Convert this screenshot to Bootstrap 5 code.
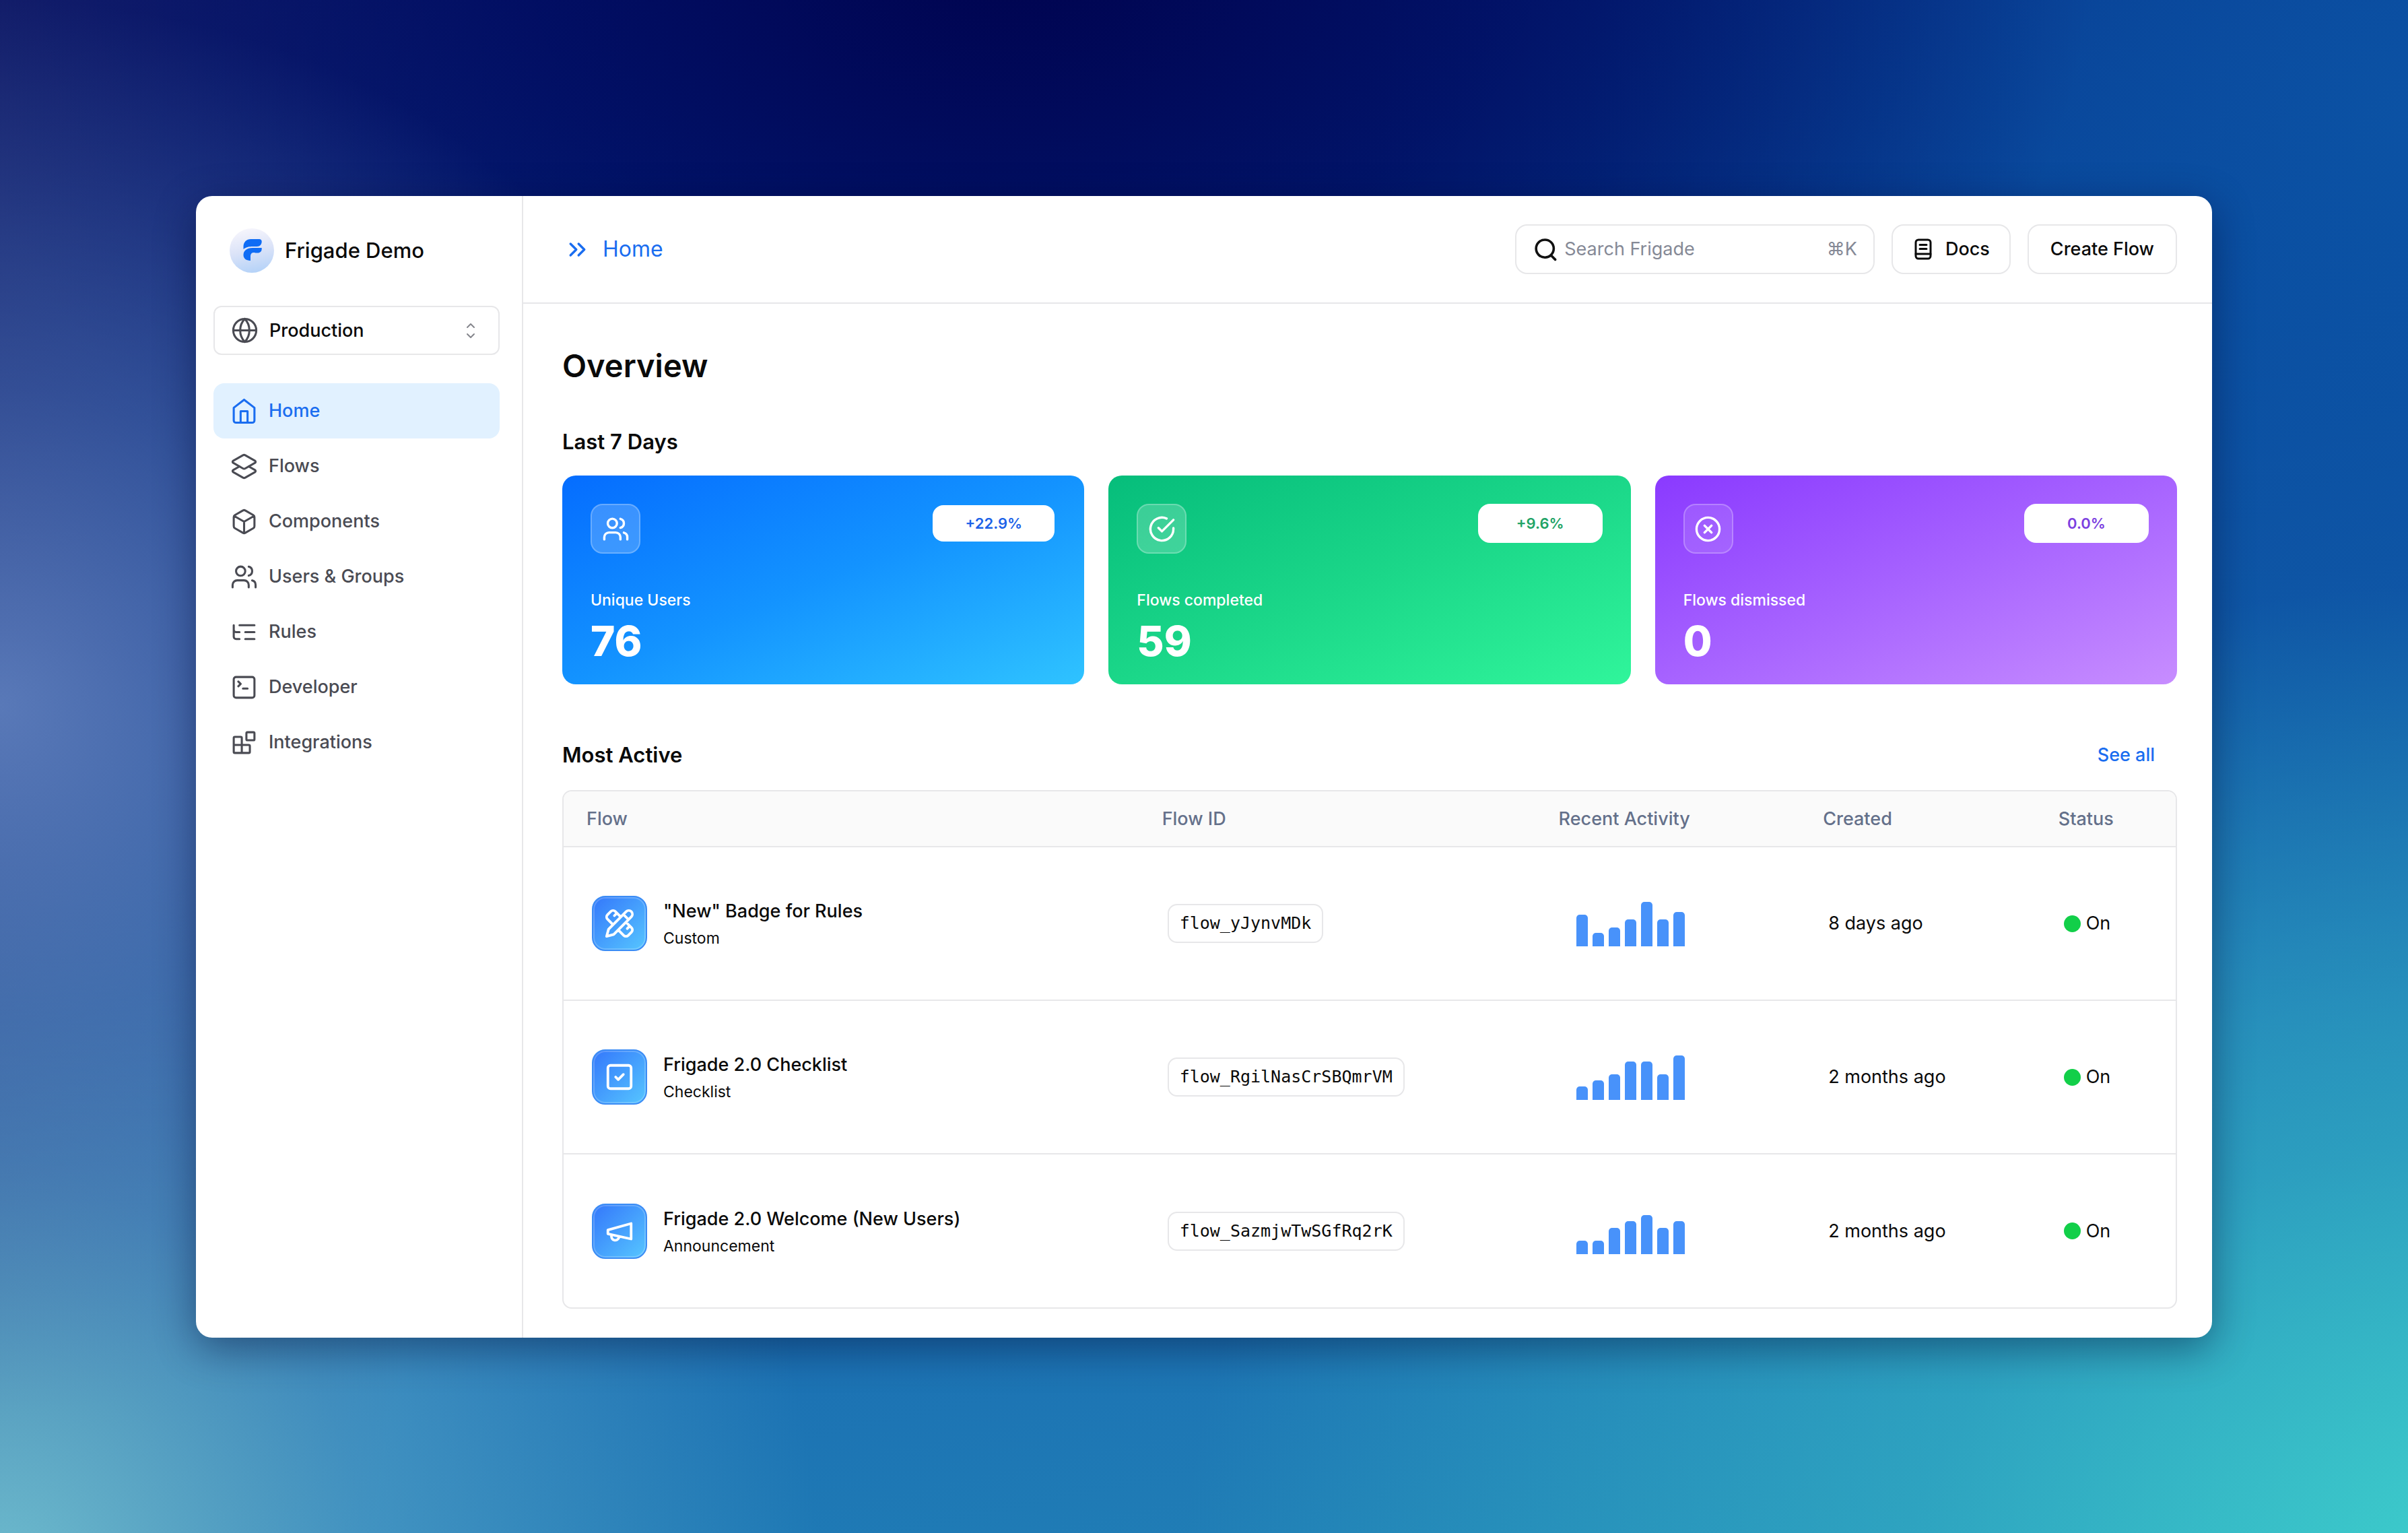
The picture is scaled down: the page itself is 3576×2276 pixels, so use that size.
<!DOCTYPE html>
<html lang="en">
<head>
<meta charset="utf-8">
<meta name="viewport" content="width=device-width, initial-scale=1">
<title>Frigade Demo</title>
<link rel="stylesheet" href="https://cdn.jsdelivr.net/npm/bootstrap@5.3.0/dist/css/bootstrap.min.css">
<style>
  :root { --line: #e7e7e9; --blue: #1a6df0; --ink: #4a4b53; --muted: #64708a; }
  body {
    font-family: Inter, "Liberation Sans", sans-serif; font-size: 27px; line-height: 40px; color: #0a0a0a;
    background:
      radial-gradient(ellipse 32% 46% at 0% 46%, rgba(96,128,190,.9), rgba(84,118,184,.5) 45%, transparent),
      radial-gradient(ellipse 34% 62% at 0% 104%, rgba(116,196,210,.95), rgba(96,172,204,.55) 45%, transparent),
      radial-gradient(ellipse 55% 66% at 104% 104%, #3fd2cd, rgba(56,190,200,.55) 45%, transparent),
      radial-gradient(ellipse 45% 52% at 42% -4%, #00034f, rgba(0,8,92,.75) 45%, transparent),
      radial-gradient(ellipse 34% 60% at 100% 8%, rgba(12,84,166,.9), rgba(12,80,164,.5) 50%, transparent),
      linear-gradient(100deg, rgba(24,32,104,.8), transparent 24%),
      linear-gradient(168deg, #041a74 0%, #06479a 35%, #1a6db2 70%, #2488b8 100%);
  }
  .stage { padding: 291px; }
  .app-window { border-radius: 24px; box-shadow: 0 16px 60px rgba(0,10,50,.45); overflow: hidden; }
  .ico { fill: none; stroke: currentColor; stroke-width: 2; stroke-linecap: round; stroke-linejoin: round; width: 41px; height: 41px; flex: none; }
  a { text-decoration: none; }

  .sidebar { width: 486px; border-right: 2px solid var(--line); padding: 48px 33px 40px 26px; }
  .brand { padding-left: 24px; gap: 16px; font-size: 31px; font-weight: 500; margin-bottom: 49px; }
  .brand svg { width: 66px; height: 66px; }
  .env { height: 73px; border: 2px solid var(--line); border-radius: 12px; padding: 0 29px 0 24px; gap: 16px; margin-bottom: 42px; color: var(--ink); }
  .env select { border: 0; background: none; appearance: none; font-weight: 500; color: #0a0a0a; padding: 0; outline: 0; }
  .env .caret { width: 24px; height: 32px; color: #85868c; }
  .side-nav .nav-link { height: 82px; border-radius: 16px; padding: 0 0 0 25px; gap: 16px; color: var(--ink); font-weight: 500; }
  .side-nav .nav-link.active { background: #e1f1ff; color: var(--blue); }
  .side-nav .ico, .env .globe { stroke-width: 1.8; }

  .topbar { height: 160px; border-bottom: 2px solid var(--line); padding: 0 52px 0 60px; }
  .crumb { gap: 17px; font-size: 32px; color: var(--blue); }
  .tools { gap: 25px; }
  .field, .tool-btn { height: 74px; border: 2px solid var(--line); border-radius: 18px; background: #fff; }
  .field { width: 534px; padding: 0 24px 0 26px; gap: 11px; color: #858996; }
  .field input { border: 0; outline: 0; padding: 0; background: none; min-width: 0; }
  .field input::placeholder { color: #858996; opacity: 1; }
  .field svg { width: 38px; height: 38px; color: #111; }
  .tool-btn { font-size: 27px; font-weight: 500; color: #0a0a0a; padding: 0 32px; gap: 20px; }
  .tool-btn.docs { padding-right: 29px; }
  .tool-btn svg { width: 26px; height: 32px; }

  .content { padding: 62px 52px 43px 58px; }
  h1 { font-size: 47px; line-height: 60px; font-weight: 600; margin-bottom: 63px; }
  h2 { font-size: 31px; line-height: 40px; font-weight: 600; margin: 0; }
  .stats { gap: 36px; margin: 30px 0 85px; }
  .stat { border-radius: 20px; padding: 42px 42px 32px; color: #fff; }
  .stat-users { background: linear-gradient(158deg, #056dff, #1393ff 50%, #2fc3ff); }
  .stat-done { background: linear-gradient(158deg, #06bd7b, #1bd789 50%, #30f59b); }
  .stat-gone { background: linear-gradient(158deg, #8a3aff, #a763ff 50%, #c78dff); }
  .stat-icon { width: 74px; height: 74px; border-radius: 18px; border: 2px solid rgba(255,255,255,.24); background: rgba(255,255,255,.2); }
  .stat-gone .stat-icon { background: rgba(255,255,255,.12); }
  .delta { width: 185px; height: 58px; border-radius: 18px; background: #fff; font-size: 22px; font-weight: 600; }
  .stat-users .delta { color: #1c62e8; border: 2px solid transparent; background-clip: padding-box; }
  .stat-done .delta { color: #21a366; }
  .stat-gone .delta { color: #7c3fe0; }
  .stat-label { font-size: 23px; line-height: 34px; font-weight: 500; margin: 52px 0 12px; }
  .stat-value { font-size: 62px; line-height: 64px; font-weight: 800; }

  .see-all { color: var(--blue); font-weight: 500; padding-right: 33px; }
  .flows { border: 2px solid var(--line); border-radius: 14px; overflow: hidden; margin-top: 32px; }
  .flows table { table-layout: fixed; margin: 0; --bs-table-bg: transparent; color: #0a0a0a; }
  .flows th { height: 82px; padding: 0 0 0 34px; background: #fafafa; color: var(--muted); font-weight: 500; border-bottom: 2px solid var(--line); vertical-align: middle; }
  .flows td { height: 228px; padding: 0 0 0 42px; border-bottom: 2px solid var(--line); vertical-align: middle; }
  .flows tbody tr:last-child td { border-bottom: 0; }
  .c-flow { width: 35.7%; } .c-id { width: 24.6%; } .c-act { width: 16.4%; } .c-date { width: 14.6%; } .c-stat { width: 8.7%; }
  .flow-icon { width: 82px; height: 82px; border-radius: 20px; color: #fff; border: 2px solid #3b8cf5; background: linear-gradient(135deg, #3478fb, #56c6ff); box-shadow: inset 0 0 0 2px rgba(255,255,255,.2); }
  .flow-icon .ico { width: 46px; height: 46px; }
  .flow-text { line-height: 41px; padding-top: 4px; }
  .flow-text b { font-weight: 500; }
  .flow-text span { font-size: 23px; }
  .chip { font: 25px/54px "DejaVu Sans Mono", monospace; height: 58px; border: 2px solid var(--line); border-radius: 14px; padding: 0 16px; color: #0a0a0a; display: inline-block; vertical-align: middle; }
  .bars { height: 68px; gap: 7px; margin-left: 18px; }
  .bars i { width: 17px; background: #4892fa; border-radius: 5px 5px 0 0; }
  .dot { width: 25px; height: 25px; border-radius: 50%; background: #12cf49; }
  .state { gap: 8px; }
</style>
<script src="https://cdn.jsdelivr.net/npm/bootstrap@5.3.0/dist/js/bootstrap.bundle.min.js"></script>
</head>
<body>
<svg class="d-none" aria-hidden="true">
  <symbol id="users" viewBox="0 0 24 24"><path d="M16 21v-2a4 4 0 0 0-4-4H6a4 4 0 0 0-4 4v2"/><circle cx="9" cy="7" r="4"/><path d="M22 21v-2a4 4 0 0 0-3-3.87M16 3.13a4 4 0 0 1 0 7.75"/></symbol>
</svg>
<div class="stage d-flex min-vh-100">
<div class="app-window d-flex flex-grow-1 bg-white">

  <aside class="sidebar flex-shrink-0">
    <div class="brand d-flex align-items-center">
      <svg viewBox="0 0 66 66" aria-hidden="true">
        <defs><linearGradient id="lg" x1=".4" y1="0" x2=".6" y2="1"><stop offset="0" stop-color="#f6f5fc"/><stop offset=".5" stop-color="#dbe3f8"/><stop offset="1" stop-color="#b4d2f8"/></linearGradient></defs>
        <circle cx="33" cy="33" r="33" fill="url(#lg)"/>
        <path fill="#0f6cf5" d="M20.500 31v-4c0-6.500 4.500-11 11-11h12.500c2.200 0 3.700 1.400 3.700 3.500 0 4.500-2.700 7.500-7 7.500h-6c-6 0-9.500.5-14.200 4z"/>
        <path fill="#0f6cf5" d="M47.700 29v1.500c0 3.600-2.300 6-6 6h-3.200c-1.500 0-2.300-.4-3.300-.4-1.400 0-2.700.9-3.300 2-.6 1-.9 2-.9 4V48c-6.500 0-10.500-3.300-10.500-8.200 0-6.500 5-10.800 13.500-10.800z"/>
      </svg>
      <span>Frigade Demo</span>
    </div>

    <div class="env d-flex align-items-center">
      <svg class="ico globe" viewBox="0 0 24 24"><circle cx="12" cy="12" r="10"/><path d="M12 2a14.500 14.500 0 0 0 0 20 14.500 14.500 0 0 0 0-20M2 12h20"/></svg>
      <select class="flex-grow-1" aria-label="Environment"><option>Production</option></select>
      <svg class="ico caret" viewBox="0 0 24 32"><path d="m7 11 5-5 5 5M7 21l5 5 5-5"/></svg>
    </div>

    <nav class="side-nav nav flex-column">
      <a href="#" class="nav-link active d-flex align-items-center"><svg class="ico" viewBox="0 0 24 24"><path d="m3 9 9-7 9 7v11a2 2 0 0 1-2 2H5a2 2 0 0 1-2-2zM9 22V12h6v10"/></svg>Home</a>
      <a href="#" class="nav-link d-flex align-items-center"><svg class="ico" viewBox="0 0 24 24"><path d="m16.020 12 5.480 3.130a1 1 0 0 1 0 1.740L13 21.740a2 2 0 0 1-2 0l-8.500-4.870a1 1 0 0 1 0-1.740L7.980 12"/><path d="M13 13.740a2 2 0 0 1-2 0L2.500 8.870a1 1 0 0 1 0-1.740L11 2.260a2 2 0 0 1 2 0l8.500 4.870a1 1 0 0 1 0 1.740Z"/></svg>Flows</a>
      <a href="#" class="nav-link d-flex align-items-center"><svg class="ico" viewBox="0 0 24 24"><path d="M21 8a2 2 0 0 0-1-1.730l-7-4a2 2 0 0 0-2 0l-7 4A2 2 0 0 0 3 8v8a2 2 0 0 0 1 1.730l7 4a2 2 0 0 0 2 0l7-4A2 2 0 0 0 21 16ZM3.300 7l8.700 5 8.700-5M12 22V12"/></svg>Components</a>
      <a href="#" class="nav-link d-flex align-items-center"><svg class="ico"><use href="#users"/></svg>Users &amp; Groups</a>
      <a href="#" class="nav-link d-flex align-items-center"><svg class="ico" viewBox="0 0 24 24"><path d="M21 12h-8M21 6H8M21 18h-8M3 6v4c0 1.100.9 2 2 2h3M3 10v6c0 1.100.9 2 2 2h3"/></svg>Rules</a>
      <a href="#" class="nav-link d-flex align-items-center"><svg class="ico" viewBox="0 0 24 24"><rect x="3" y="3" width="18" height="18" rx="2"/><path d="m7 11 2-2-2-2M11 13h4"/></svg>Developer</a>
      <a href="#" class="nav-link d-flex align-items-center"><svg class="ico" viewBox="0 0 24 24"><rect x="14" y="3" width="7" height="7" rx="1"/><path d="M10 21V8a1 1 0 0 0-1-1H4a1 1 0 0 0-1 1v12a1 1 0 0 0 1 1h12a1 1 0 0 0 1-1v-5a1 1 0 0 0-1-1H3"/></svg>Integrations</a>
    </nav>
  </aside>

  <div class="flex-grow-1">
    <header class="topbar d-flex align-items-center justify-content-between">
      <a href="#" class="crumb d-flex align-items-center"><svg class="ico" viewBox="0 0 24 24"><path d="m6 17 5-5-5-5M13 17l5-5-5-5"/></svg>Home</a>
      <div class="tools d-flex">
        <label class="field d-flex align-items-center">
          <svg viewBox="0 0 38 38" fill="none" stroke="currentColor" stroke-width="4" stroke-linecap="round"><circle cx="18" cy="18" r="14.500"/><path d="m28 29 7 7"/></svg>
          <input class="flex-grow-1" type="text" placeholder="Search Frigade" aria-label="Search Frigade">
          <span>⌘K</span>
        </label>
        <button type="button" class="tool-btn docs d-flex align-items-center"><svg viewBox="0 0 26 32" fill="none" stroke="currentColor" stroke-width="3" stroke-linecap="round"><rect x="2" y="2" width="22" height="28" rx="4"/><path d="M8 9.500h10M8 15.500h10M2 23h22"/></svg>Docs</button>
        <button type="button" class="tool-btn">Create Flow</button>
      </div>
    </header>

    <main class="content">
      <h1>Overview</h1>
      <h2>Last 7 Days</h2>
      <div class="stats d-flex">
        <section class="stat stat-users flex-fill w-100">
          <div class="d-flex justify-content-between">
            <span class="stat-icon d-flex align-items-center justify-content-center"><svg class="ico"><use href="#users"/></svg></span>
            <span class="delta d-flex align-items-center justify-content-center">+22.9%</span>
          </div>
          <div class="stat-label">Unique Users</div>
          <div class="stat-value">76</div>
        </section>
        <section class="stat stat-done flex-fill w-100">
          <div class="d-flex justify-content-between">
            <span class="stat-icon d-flex align-items-center justify-content-center"><svg class="ico" viewBox="0 0 24 24"><path d="M22 11.080V12a10 10 0 1 1-5.930-9.140M9 11l3 3L22 4"/></svg></span>
            <span class="delta d-flex align-items-center justify-content-center">+9.6%</span>
          </div>
          <div class="stat-label">Flows completed</div>
          <div class="stat-value">59</div>
        </section>
        <section class="stat stat-gone flex-fill w-100">
          <div class="d-flex justify-content-between">
            <span class="stat-icon d-flex align-items-center justify-content-center"><svg class="ico" viewBox="0 0 24 24"><circle cx="12" cy="12" r="10"/><path d="m15 9-6 6M9 9l6 6"/></svg></span>
            <span class="delta d-flex align-items-center justify-content-center">0.0%</span>
          </div>
          <div class="stat-label">Flows dismissed</div>
          <div class="stat-value">0</div>
        </section>
      </div>

      <div class="d-flex justify-content-between">
        <h2>Most Active</h2>
        <a href="#" class="see-all">See all</a>
      </div>

      <div class="flows">
        <table class="table table-borderless">
          <thead>
            <tr><th class="c-flow">Flow</th><th class="c-id">Flow ID</th><th class="c-act">Recent Activity</th><th class="c-date">Created</th><th class="c-stat">Status</th></tr>
          </thead>
          <tbody>
            <tr>
              <td><div class="d-flex align-items-center gap-4">
                <span class="flow-icon d-flex align-items-center justify-content-center"><svg class="ico" viewBox="0 0 24 24"><path d="m15 5 4 4M13 7 8.700 2.700a2.410 2.410 0 0 0-3.400 0L2.700 5.300a2.410 2.410 0 0 0 0 3.400L7 13M8 6l2-2M2 22l5.500-1.500L21.170 6.830a2.820 2.820 0 0 0-4-4L3.500 16.500ZM18 16l2-2M17 11l4.300 4.300c.940.940.940 2.460 0 3.400l-2.600 2.600c-.940.940-2.460.940-3.400 0L11 17"/></svg></span>
                <div class="flow-text d-flex flex-column"><b>"New" Badge for Rules</b><span>Custom</span></div>
              </div></td>
              <td><code class="chip">flow_yJynvMDk</code></td>
              <td><div class="bars d-flex align-items-end"><i style="height:47px"></i><i style="height:20px"></i><i style="height:28px"></i><i style="height:40px"></i><i style="height:66px"></i><i style="height:40px"></i><i style="height:51px"></i></div></td>
              <td>8 days ago</td>
              <td><div class="state d-flex align-items-center"><span class="dot"></span>On</div></td>
            </tr>
            <tr>
              <td><div class="d-flex align-items-center gap-4">
                <span class="flow-icon d-flex align-items-center justify-content-center"><svg class="ico" viewBox="0 0 24 24"><rect x="3" y="3" width="18" height="18" rx="2"/><path d="m9 12 2 2 4-4"/></svg></span>
                <div class="flow-text d-flex flex-column"><b>Frigade 2.0 Checklist</b><span>Checklist</span></div>
              </div></td>
              <td><code class="chip">flow_RgilNasCrSBQmrVM</code></td>
              <td><div class="bars d-flex align-items-end"><i style="height:20px"></i><i style="height:29px"></i><i style="height:38px"></i><i style="height:57px"></i><i style="height:57px"></i><i style="height:38px"></i><i style="height:66px"></i></div></td>
              <td>2 months ago</td>
              <td><div class="state d-flex align-items-center"><span class="dot"></span>On</div></td>
            </tr>
            <tr>
              <td><div class="d-flex align-items-center gap-4">
                <span class="flow-icon d-flex align-items-center justify-content-center"><svg class="ico" viewBox="0 0 24 24"><path d="m3 11 18-5v12L3 14v-3zM11.600 16.800a3 3 0 1 1-5.800-1.600"/></svg></span>
                <div class="flow-text d-flex flex-column"><b>Frigade 2.0 Welcome (New Users)</b><span>Announcement</span></div>
              </div></td>
              <td><code class="chip">flow_SazmjwTwSGfRq2rK</code></td>
              <td><div class="bars d-flex align-items-end"><i style="height:20px"></i><i style="height:20px"></i><i style="height:39px"></i><i style="height:49px"></i><i style="height:58px"></i><i style="height:39px"></i><i style="height:49px"></i></div></td>
              <td>2 months ago</td>
              <td><div class="state d-flex align-items-center"><span class="dot"></span>On</div></td>
            </tr>
          </tbody>
        </table>
      </div>
    </main>
  </div>
</div>
</div>
</body>
</html>
